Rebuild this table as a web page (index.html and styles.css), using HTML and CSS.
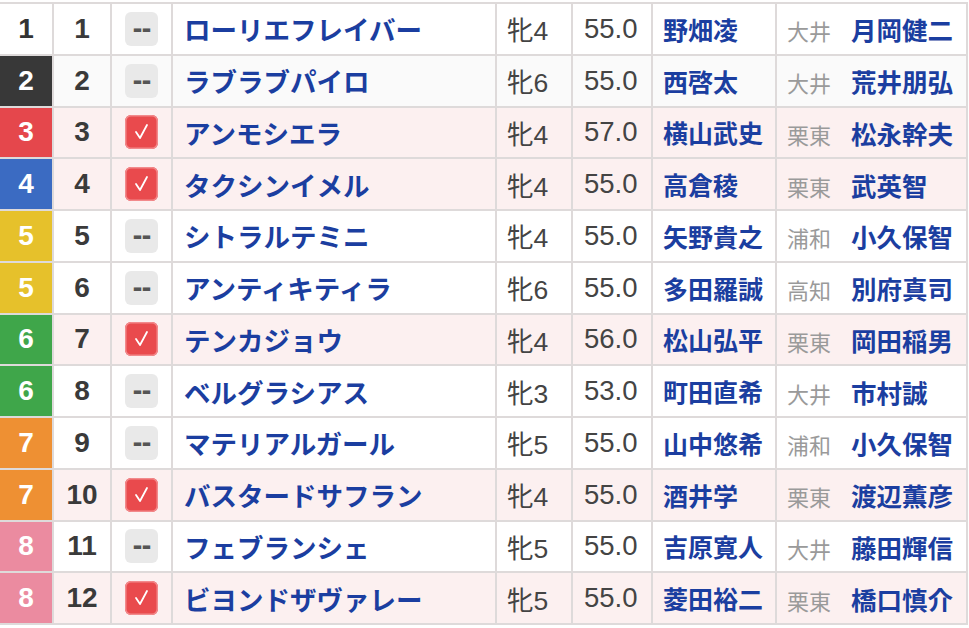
FILE: index.html
```html
<!DOCTYPE html>
<html lang="ja">
<head>
<meta charset="utf-8">
<link rel="stylesheet" href="styles.css">
</head>
<body>
<div class="wrap">
<table class="entries">
<colgroup>
<col class="c-frame"><col class="c-num"><col class="c-mark"><col class="c-name"><col class="c-sex"><col class="c-wt"><col class="c-jk"><col class="c-tr">
</colgroup>
<tbody>
<tr><td class="frame f1">1</td><td class="num">1</td><td class="mark"><span class="box off">--</span></td><td class="name">ローリエフレイバー</td><td class="sex">牝4</td><td class="wt">55.0</td><td class="jk">野畑凌</td><td class="tr"><span class="aff">大井</span><span class="trn">月岡健二</span></td></tr>
<tr class="alt"><td class="frame f2">2</td><td class="num">2</td><td class="mark"><span class="box off">--</span></td><td class="name">ラブラブパイロ</td><td class="sex">牝6</td><td class="wt">55.0</td><td class="jk">西啓太</td><td class="tr"><span class="aff">大井</span><span class="trn">荒井朋弘</span></td></tr>
<tr class="on"><td class="frame f3">3</td><td class="num">3</td><td class="mark"><span class="box chk"><svg viewBox="0 0 33 34" width="33" height="34"><polyline points="11,17 15,23 22,10" /></svg></span></td><td class="name">アンモシエラ</td><td class="sex">牝4</td><td class="wt">57.0</td><td class="jk">横山武史</td><td class="tr"><span class="aff">栗東</span><span class="trn">松永幹夫</span></td></tr>
<tr class="on"><td class="frame f4">4</td><td class="num">4</td><td class="mark"><span class="box chk"><svg viewBox="0 0 33 34" width="33" height="34"><polyline points="11,17 15,23 22,10" /></svg></span></td><td class="name">タクシンイメル</td><td class="sex">牝4</td><td class="wt">55.0</td><td class="jk">高倉稜</td><td class="tr"><span class="aff">栗東</span><span class="trn">武英智</span></td></tr>
<tr><td class="frame f5">5</td><td class="num">5</td><td class="mark"><span class="box off">--</span></td><td class="name">シトラルテミニ</td><td class="sex">牝4</td><td class="wt">55.0</td><td class="jk">矢野貴之</td><td class="tr"><span class="aff">浦和</span><span class="trn">小久保智</span></td></tr>
<tr><td class="frame f5">5</td><td class="num">6</td><td class="mark"><span class="box off">--</span></td><td class="name">アンティキティラ</td><td class="sex">牝6</td><td class="wt">55.0</td><td class="jk">多田羅誠</td><td class="tr"><span class="aff">高知</span><span class="trn">別府真司</span></td></tr>
<tr class="on"><td class="frame f6">6</td><td class="num">7</td><td class="mark"><span class="box chk"><svg viewBox="0 0 33 34" width="33" height="34"><polyline points="11,17 15,23 22,10" /></svg></span></td><td class="name">テンカジョウ</td><td class="sex">牝4</td><td class="wt">56.0</td><td class="jk">松山弘平</td><td class="tr"><span class="aff">栗東</span><span class="trn">岡田稲男</span></td></tr>
<tr><td class="frame f6">6</td><td class="num">8</td><td class="mark"><span class="box off">--</span></td><td class="name">ベルグラシアス</td><td class="sex">牝3</td><td class="wt">53.0</td><td class="jk">町田直希</td><td class="tr"><span class="aff">大井</span><span class="trn">市村誠</span></td></tr>
<tr><td class="frame f7">7</td><td class="num">9</td><td class="mark"><span class="box off">--</span></td><td class="name">マテリアルガール</td><td class="sex">牝5</td><td class="wt">55.0</td><td class="jk">山中悠希</td><td class="tr"><span class="aff">浦和</span><span class="trn">小久保智</span></td></tr>
<tr class="on"><td class="frame f7">7</td><td class="num">10</td><td class="mark"><span class="box chk"><svg viewBox="0 0 33 34" width="33" height="34"><polyline points="11,17 15,23 22,10" /></svg></span></td><td class="name">バスタードサフラン</td><td class="sex">牝4</td><td class="wt">55.0</td><td class="jk">酒井学</td><td class="tr"><span class="aff">栗東</span><span class="trn">渡辺薫彦</span></td></tr>
<tr><td class="frame f8">8</td><td class="num">11</td><td class="mark"><span class="box off">--</span></td><td class="name">フェブランシェ</td><td class="sex">牝5</td><td class="wt">55.0</td><td class="jk">吉原寛人</td><td class="tr"><span class="aff">大井</span><span class="trn">藤田輝信</span></td></tr>
<tr class="on"><td class="frame f8">8</td><td class="num">12</td><td class="mark"><span class="box chk"><svg viewBox="0 0 33 34" width="33" height="34"><polyline points="11,17 15,23 22,10" /></svg></span></td><td class="name">ビヨンドザヴァレー</td><td class="sex">牝5</td><td class="wt">55.0</td><td class="jk">菱田裕二</td><td class="tr"><span class="aff">栗東</span><span class="trn">橋口慎介</span></td></tr>
</tbody>
</table>
</div>
</body>
</html>
```
FILE: styles.css
```css
html, body {
  margin: 0;
  padding: 0;
  background: #ffffff;
}
body {
  font-family: "Liberation Sans", "Noto Sans CJK JP", sans-serif;
  color: #333;
}
.wrap {
  padding-top: 2px;
  width: 967px;
}
.entries {
  table-layout: fixed;
  border-collapse: collapse;
  width: 967px;
}
.c-frame { width: 53px; }
.c-num { width: 58px; }
.c-mark { width: 61px; }
.c-name { width: 324px; }
.c-sex { width: 76px; }
.c-wt { width: 80px; }
.c-jk { width: 124px; }
.c-tr { width: 191px; }

.entries td {
  height: 49.75px;
  padding: 0;
  border: 2px solid #dedada;
  vertical-align: middle;
  white-space: nowrap;
  overflow: hidden;
}
.entries tr td:first-child { border-left: none; }
.entries tr.alt { background: #fafafa; }
.entries tr.on { background: #fcf0f0; }

.frame {
  text-align: center;
  font-weight: bold;
  font-size: 28px;
  color: #fff;
}
.f1 { background: #fff; color: #333; }
.f2 { background: #383838; }
.f3 { background: #e5474c; }
.f4 { background: #3b6bc2; }
.f5 { background: #e6c12b; }
.f6 { background: #3fa64a; }
.f7 { background: #ee9033; }
.f8 { background: #eb8ba0; }

.num {
  text-align: center;
  font-weight: bold;
  font-size: 28px;
  color: #3a3a3a;
}
.mark { text-align: center; }
.box {
  display: inline-flex;
  align-items: center;
  justify-content: center;
  width: 33px;
  height: 34px;
  border-radius: 6px;
  vertical-align: middle;
  box-sizing: border-box;
}
.box.off {
  background: #e9e9e9;
  color: #555;
  font-weight: bold;
  font-size: 24px;
  font-family: "DejaVu Sans", sans-serif;
  letter-spacing: -1px;
  padding-left: 0;
}
.box.chk {
  background: #e94a4d;
  box-shadow: inset 0 0 0 1.5px #f28a8c;
}
.box.chk svg {
  display: block;
  fill: none;
  stroke: #fff;
  stroke-width: 1.8;
  stroke-linecap: round;
  stroke-linejoin: round;
}
.name {
  padding-left: 11px !important;
  font-family: "Noto Sans CJK JP", sans-serif;
  font-weight: bold;
  font-size: 26.5px;
  color: #1b3ea0;
}
.sex {
  padding-left: 10px !important;
  font-size: 26.5px;
  color: #444;
}
.wt {
  padding-left: 11px !important;
  font-size: 27.5px;
  color: #444;
}
.jk {
  padding-left: 10px !important;
  font-family: "Noto Sans CJK JP", sans-serif;
  font-weight: bold;
  font-size: 25px;
  color: #1b3ea0;
}
.tr {
  padding-left: 10px !important;
  font-family: "Noto Sans CJK JP", sans-serif;
}
.aff {
  font-size: 22px;
  color: #9a9a9a;
  margin-right: 20px;
}
.trn {
  font-weight: bold;
  font-size: 25.5px;
  color: #1b3ea0;
}
```
